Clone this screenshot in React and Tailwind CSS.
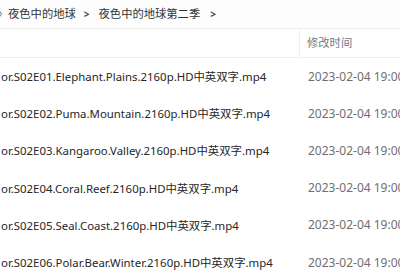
import React from "react";

const files = [
  "or.S02E01.Elephant.Plains.2160p.HD中英双字.mp4",
  "or.S02E02.Puma.Mountain.2160p.HD中英双字.mp4",
  "or.S02E03.Kangaroo.Valley.2160p.HD中英双字.mp4",
  "or.S02E04.Coral.Reef.2160p.HD中英双字.mp4",
  "or.S02E05.Seal.Coast.2160p.HD中英双字.mp4",
  "or.S02E06.Polar.Bear.Winter.2160p.HD中英双字.mp4",
];

const font = { fontFamily: '"Noto Sans", "Noto Sans CJK SC", sans-serif' };

const App = () => {
  return (
    <div
      className="w-[400px] h-[280px] overflow-hidden bg-white text-[#1f1f1f]"
      style={font}
    >
      {/* breadcrumb */}
      <div className="h-[29px] flex items-center border-b border-[#efefef] bg-[#fdfdfd] text-[11.3px] text-[#333] whitespace-nowrap">
        {/* tail of the previous chevron, cut by the window edge */}
        <svg width="2" height="6" viewBox="0 0 2 6" className="shrink-0">
          <path d="M0 0.5 L1.5 3 L0 5.5" fill="none" stroke="#777" strokeWidth="1" />
        </svg>
        <span className="ml-[6px]">夜色中的地球</span>
        <span className="ml-[8px] text-[#444] text-[10px] font-bold">&gt;</span>
        <span className="ml-[9px]">夜色中的地球第二季</span>
        <span className="ml-[10px] text-[#444] text-[10px] font-bold">&gt;</span>
      </div>

      {/* column header */}
      <div className="h-[29px] flex border-b border-[#efefef]">
        <div className="w-[300px] border-r border-[#efefef]" />
        <div className="flex items-center pl-[7px] text-[11.3px] text-[#6e7b8b]">
          修改时间
        </div>
      </div>

      {/* rows */}
      {files.map((name) => (
        <div key={name} className="h-[37.2px] flex items-center whitespace-nowrap">
          <div className="w-[308px] shrink-0 pl-[1px] text-[11.4px] text-[#262626]">{name}</div>
          <div className="text-[12px] text-[#6f6f6f]">2023-02-04 19:00</div>
        </div>
      ))}
    </div>
  );
};

export default App;
